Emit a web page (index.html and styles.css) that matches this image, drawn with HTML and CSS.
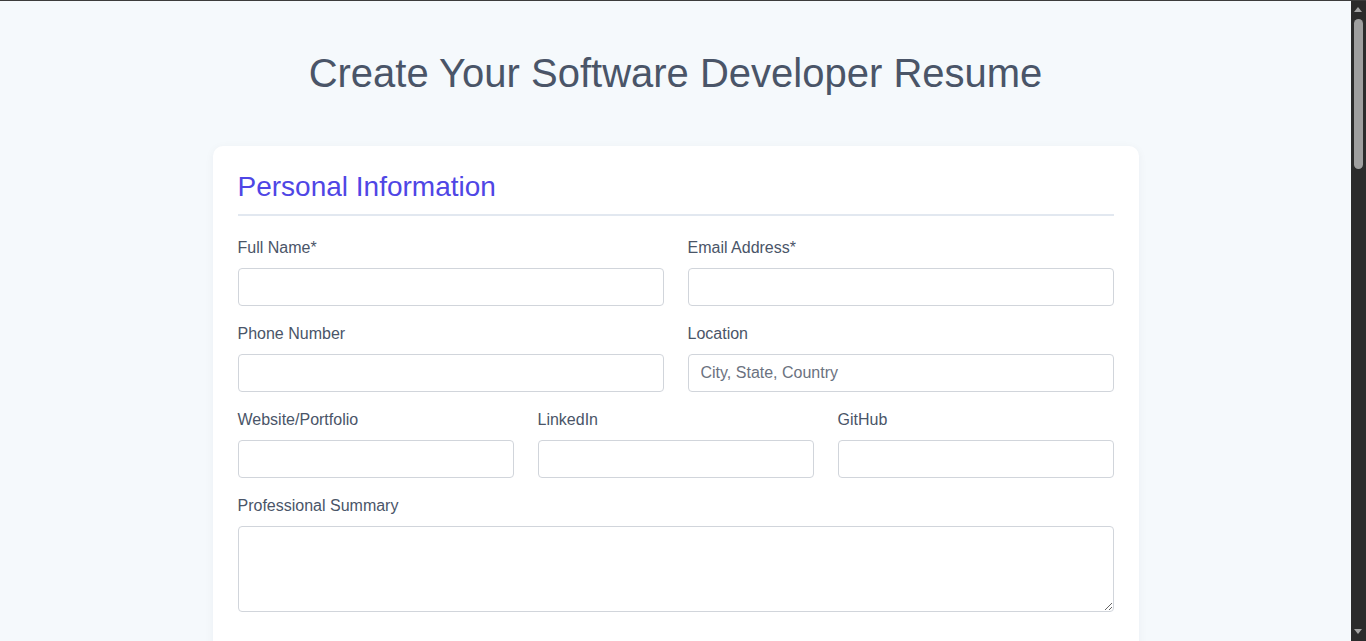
FILE: index.html
```html
<!DOCTYPE html>
<html lang="en">
<head>
<meta charset="utf-8">
<title>Software Developer Resume Builder</title>
<link rel="stylesheet" href="styles.css">
</head>
<body>
<div class="page">
  <h1 class="title">Create Your Software Developer Resume</h1>
  <form class="card">
    <section class="section">
      <h2 class="section-title">Personal Information</h2>
      <div class="row two">
        <div class="group">
          <label class="label" for="fullName">Full Name*</label>
          <input class="field" id="fullName" type="text">
        </div>
        <div class="group">
          <label class="label" for="email">Email Address*</label>
          <input class="field" id="email" type="email">
        </div>
      </div>
      <div class="row two">
        <div class="group">
          <label class="label" for="phone">Phone Number</label>
          <input class="field" id="phone" type="tel">
        </div>
        <div class="group">
          <label class="label" for="location">Location</label>
          <input class="field" id="location" type="text" placeholder="City, State, Country">
        </div>
      </div>
      <div class="row three">
        <div class="group">
          <label class="label" for="website">Website/Portfolio</label>
          <input class="field" id="website" type="url">
        </div>
        <div class="group">
          <label class="label" for="linkedin">LinkedIn</label>
          <input class="field" id="linkedin" type="url">
        </div>
        <div class="group">
          <label class="label" for="github">GitHub</label>
          <input class="field" id="github" type="url">
        </div>
      </div>
      <div class="group">
        <label class="label" for="summary">Professional Summary</label>
        <textarea class="field area" id="summary"></textarea>
      </div>
    </section>

    <section class="section">
      <h2 class="section-title">Technical Skills</h2>
      <div class="row two">
        <div class="group">
          <label class="label" for="languages">Programming Languages</label>
          <input class="field" id="languages" type="text" placeholder="JavaScript, Python, Java">
        </div>
        <div class="group">
          <label class="label" for="frameworks">Frameworks &amp; Libraries</label>
          <input class="field" id="frameworks" type="text" placeholder="React, Node.js, Django">
        </div>
      </div>
      <div class="row two">
        <div class="group">
          <label class="label" for="tools">Tools &amp; Platforms</label>
          <input class="field" id="tools" type="text" placeholder="Git, Docker, AWS">
        </div>
        <div class="group">
          <label class="label" for="databases">Databases</label>
          <input class="field" id="databases" type="text" placeholder="PostgreSQL, MongoDB">
        </div>
      </div>
    </section>

    <section class="section">
      <h2 class="section-title">Work Experience</h2>
      <div class="row two">
        <div class="group">
          <label class="label" for="jobTitle">Job Title</label>
          <input class="field" id="jobTitle" type="text">
        </div>
        <div class="group">
          <label class="label" for="company">Company</label>
          <input class="field" id="company" type="text">
        </div>
      </div>
      <div class="row three">
        <div class="group">
          <label class="label" for="jobLocation">Location</label>
          <input class="field" id="jobLocation" type="text">
        </div>
        <div class="group">
          <label class="label" for="startDate">Start Date</label>
          <input class="field" id="startDate" type="text">
        </div>
        <div class="group">
          <label class="label" for="endDate">End Date</label>
          <input class="field" id="endDate" type="text">
        </div>
      </div>
      <div class="group">
        <label class="label" for="responsibilities">Responsibilities &amp; Achievements</label>
        <textarea class="field area tall" id="responsibilities"></textarea>
      </div>
      <button class="secondary" type="button">+ Add Another Position</button>
    </section>

    <section class="section">
      <h2 class="section-title">Projects</h2>
      <div class="row two">
        <div class="group">
          <label class="label" for="projectName">Project Name</label>
          <input class="field" id="projectName" type="text">
        </div>
        <div class="group">
          <label class="label" for="projectLink">Project Link</label>
          <input class="field" id="projectLink" type="url">
        </div>
      </div>
      <div class="group">
        <label class="label" for="techUsed">Technologies Used</label>
        <input class="field" id="techUsed" type="text">
      </div>
      <div class="group">
        <label class="label" for="projectDesc">Description</label>
        <textarea class="field area tall" id="projectDesc"></textarea>
      </div>
      <button class="secondary" type="button">+ Add Another Project</button>
    </section>

    <section class="section">
      <h2 class="section-title">Education</h2>
      <div class="row two">
        <div class="group">
          <label class="label" for="degree">Degree</label>
          <input class="field" id="degree" type="text">
        </div>
        <div class="group">
          <label class="label" for="school">Institution</label>
          <input class="field" id="school" type="text">
        </div>
      </div>
      <div class="row two">
        <div class="group">
          <label class="label" for="gradYear">Graduation Year</label>
          <input class="field" id="gradYear" type="text">
        </div>
        <div class="group">
          <label class="label" for="gpa">GPA (optional)</label>
          <input class="field" id="gpa" type="text">
        </div>
      </div>
    </section>

    <section class="section">
      <h2 class="section-title">Certifications</h2>
      <div class="group">
        <label class="label" for="certs">Certifications &amp; Courses</label>
        <textarea class="field area" id="certs"></textarea>
      </div>
    </section>

    <div class="actions">
      <button class="primary" type="button">Generate Resume</button>
    </div>
  </form>
</div>

<div class="scrollbar" aria-hidden="true">
  <span class="sb-arrow sb-up"></span>
  <span class="sb-thumb"></span>
  <span class="sb-arrow sb-down"></span>
</div>
</body>
</html>
```

FILE: styles.css
```css
html {
  background: #f5f9fc;
}

body {
  margin: 0;
  padding-right: 15px;
  background: #f5f9fc;
  font-family: "Liberation Sans", Arial, sans-serif;
  color: #4a5568;
}

.page {
  border-top: 1px solid #3c3c3c;
  padding: 0 20px 40px;
}

.title {
  margin: 49px 0 50px;
  font-size: 40px;
  line-height: 46px;
  font-weight: 400;
  text-align: center;
  color: #4a5568;
}

.card {
  box-sizing: border-box;
  max-width: 926px;
  margin: 0 auto;
  padding: 25px 25px 30px;
  background: #ffffff;
  border-radius: 10px;
  box-shadow: 0 2px 10px rgba(30, 41, 59, 0.05);
}

.section {
  margin-bottom: 40px;
}

.section-title {
  margin: 0 0 20px;
  padding-bottom: 11px;
  border-bottom: 2px solid #e2e8f0;
  font-size: 28px;
  line-height: 32px;
  font-weight: 400;
  color: #4f46e5;
}

.row {
  display: grid;
  column-gap: 24px;
}

.row.two {
  grid-template-columns: 1fr 1fr;
}

.row.three {
  grid-template-columns: 1fr 1fr 1fr;
}

.group {
  margin-bottom: 16px;
  min-width: 0;
}

.label {
  display: block;
  margin-bottom: 8px;
  font-size: 16px;
  line-height: 24px;
  color: #4a5568;
}

.field {
  display: block;
  box-sizing: border-box;
  width: 100%;
  height: 38px;
  margin: 0;
  padding: 0 12px;
  border: 1px solid #d1d5db;
  border-radius: 4px;
  background: #ffffff;
  font-family: "Liberation Sans", Arial, sans-serif;
  font-size: 16px;
  color: #2d3748;
}

.field::placeholder {
  color: #6b7280;
}

.area {
  height: 86px;
  padding: 10px 12px;
  resize: vertical;
}

.area.tall {
  height: 120px;
}

.secondary {
  padding: 10px 18px;
  border: 1px dashed #a5b4fc;
  border-radius: 4px;
  background: #eef2ff;
  color: #4f46e5;
  font-family: "Liberation Sans", Arial, sans-serif;
  font-size: 15px;
}

.actions {
  display: flex;
  justify-content: center;
  padding-top: 10px;
}

.primary {
  padding: 14px 36px;
  border: 0;
  border-radius: 6px;
  background: #4f46e5;
  color: #ffffff;
  font-family: "Liberation Sans", Arial, sans-serif;
  font-size: 18px;
}

/* Overlay replicating the dark window scrollbar of the reference */
.scrollbar {
  position: fixed;
  top: 0;
  right: 0;
  bottom: 0;
  width: 15px;
  background: #2b2b2b;
  border-top: 1px solid #3c3c3c;
  box-sizing: border-box;
}

.sb-arrow {
  position: absolute;
  left: 3px;
  width: 0;
  height: 0;
  border-left: 4.5px solid transparent;
  border-right: 4.5px solid transparent;
}

.sb-up {
  top: 6px;
  border-bottom: 5px solid #a3a3a3;
}

.sb-down {
  bottom: 7px;
  border-top: 5px solid #a3a3a3;
}

.sb-thumb {
  position: absolute;
  top: 18px;
  left: 3px;
  width: 9px;
  height: 150px;
  border-radius: 5px;
  background: #9f9f9f;
}
```
